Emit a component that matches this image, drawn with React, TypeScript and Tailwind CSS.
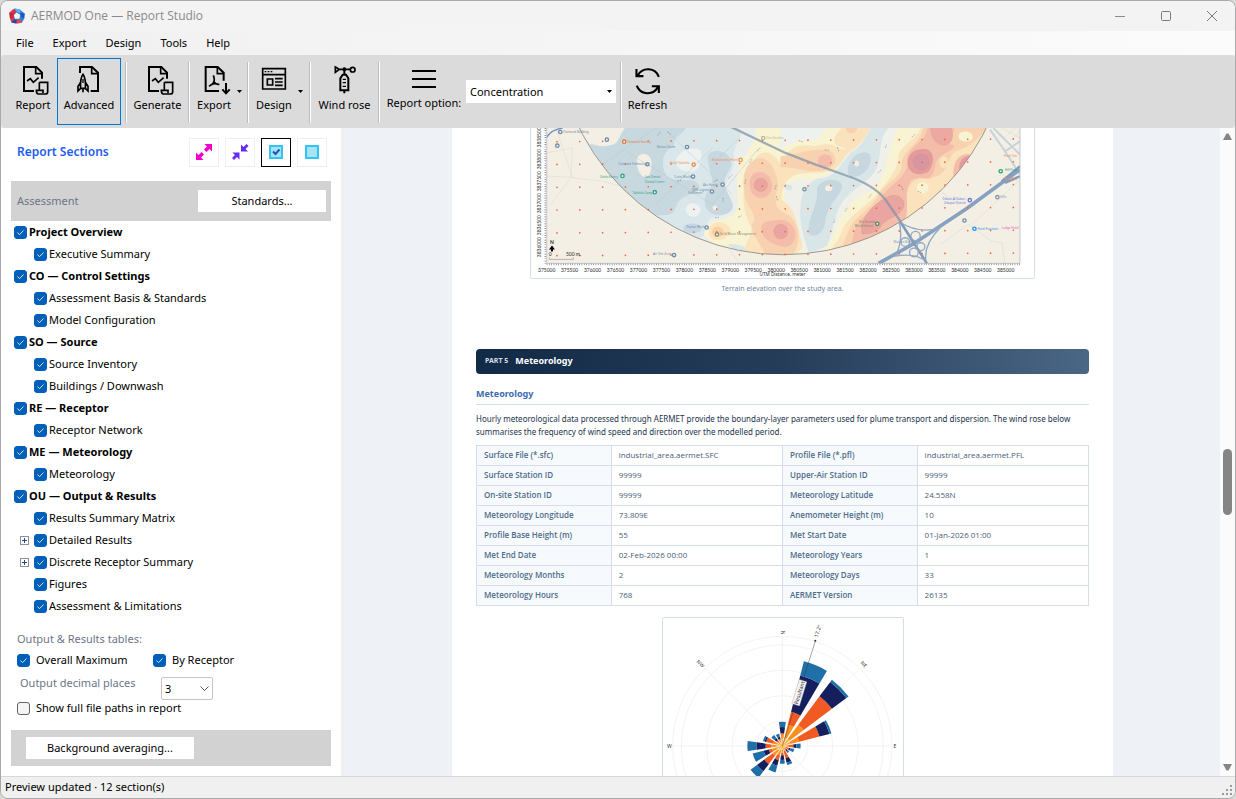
import React, { useState } from "react";

const menus = ["File", "Export", "Design", "Tools", "Help"];

type Node = { label: string; parent?: boolean; expandable?: boolean };

const tree: Node[] = [
  { label: "Project Overview", parent: true },
  { label: "Executive Summary" },
  { label: "CO — Control Settings", parent: true },
  { label: "Assessment Basis & Standards" },
  { label: "Model Configuration" },
  { label: "SO — Source", parent: true },
  { label: "Source Inventory" },
  { label: "Buildings / Downwash" },
  { label: "RE — Receptor", parent: true },
  { label: "Receptor Network" },
  { label: "ME — Meteorology", parent: true },
  { label: "Meteorology" },
  { label: "OU — Output & Results", parent: true },
  { label: "Results Summary Matrix" },
  { label: "Detailed Results", expandable: true },
  { label: "Discrete Receptor Summary", expandable: true },
  { label: "Figures" },
  { label: "Assessment & Limitations" },
];

const facts = [
  ["Surface File (*.sfc)", "industrial_area.aermet.SFC", "Profile File (*.pfl)", "industrial_area.aermet.PFL"],
  ["Surface Station ID", "99999", "Upper-Air Station ID", "99999"],
  ["On-site Station ID", "99999", "Meteorology Latitude", "24.558N"],
  ["Meteorology Longitude", "73.809E", "Anemometer Height (m)", "10"],
  ["Profile Base Height (m)", "55", "Met Start Date", "01-Jan-2026 01:00"],
  ["Met End Date", "02-Feb-2026 00:00", "Meteorology Years", "1"],
  ["Meteorology Months", "2", "Meteorology Days", "33"],
  ["Meteorology Hours", "768", "AERMET Version", "26135"],
];

function Logo() {
  return (
    <svg viewBox="-10 -10 20 20" className="size-4">
      <path d="M-3 -9.500L3.500 -8L9.500 -3L9 3L6 8.500L-1 9.500L-6.500 8L-9 2L-9.500 -4Z" fill="#2b7fdc" />
      <path d="M-5 -8.500L0 -6L-3 -3L-4.500 1L-3 4L-7 8L-9 2L-9.500 -4Z" fill="#e8343f" />
      <path d="M-9.500 -4L-4 -3.500L-4.500 1L-8 3Z" fill="#c9283c" />
      <path d="M-3 -9.500L4 -8L4.500 -3.500L0 -5Z" fill="#57b4f2" />
      <path d="M4 -4L9.500 -3L9 3L5 1Z" fill="#1c56c4" />
      <path d="M-3 4L1 5L4.500 3.500L6 8.500L0 9.500Z" fill="#e94650" />
      <path d="M-7 8L-3 4L0 5.500L-1 9.500Z" fill="#2348a8" />
      <path d="M-0.500 -4.500L4 -1.500L3 3.500L-2.500 3.500L-4 -1Z" fill="#f7f7f7" />
    </svg>
  );
}

function DocIcon() {
  return (
    <svg viewBox="69 198 84 96" className="ml-1.5 h-8 w-7" fill="none" stroke="#000" strokeWidth="6">
      <path d="M105 276H75V204H112L129 221V239" />
      <path d="M110 204V224H129" strokeWidth="5" />
      <path d="M84 246L94 239L103 250L119 236" strokeWidth="5" />
      <path d="M121 250H146V278Q146 285 138 285H118Q112 285 112 274H132V282M121 250V274" strokeWidth="5" />
    </svg>
  );
}

function RocketIcon() {
  return (
    <svg viewBox="225 198 84 96" className="h-8 w-7" fill="none" stroke="#000" strokeWidth="6">
      <path d="M240 222V204H276L294 221V276H272" />
      <path d="M275 204V224H294" strokeWidth="5" />
      <path d="M249 226Q240 238 242 268H256Q258 238 249 226ZM242 250L234 262V276L242 268M256 250L264 262V276L256 268M249 268V280" strokeWidth="5" />
      <path d="M249 240V252" strokeWidth="4" />
    </svg>
  );
}

function PdfIcon() {
  return (
    <svg viewBox="604 198 84 96" className="ml-1.5 h-8 w-7" fill="none" stroke="#000" strokeWidth="6">
      <path d="M652 276H612V204H648L666 221V245" />
      <path d="M647 204V224H666" strokeWidth="5" />
      <path d="M635 229Q641 244 634 253L622 262M635 247Q642 257 653 256M629 257Q638 252 646 255" strokeWidth="5" />
      <path d="M673 252V280M662 271L673 283L684 271" />
    </svg>
  );
}

function DesignIcon() {
  return (
    <svg viewBox="777 198 84 96" className="h-8 w-7" fill="none" stroke="#000" strokeWidth="5">
      <path d="M785 209H853V270H785ZM785 227H853" />
      <path d="M791 218H796M800 218H805M809 218H814" strokeWidth="4" />
      <path d="M799 240H815V258H799Z" />
      <path d="M822 239H845M822 249H845M822 259H845" />
    </svg>
  );
}

function WindIcon() {
  return (
    <svg viewBox="993 196 84 96" className="h-8 w-7" fill="none" stroke="#000" strokeWidth="6">
      <path d="M1006 202V218L1018 209ZM1012 209H1050" strokeWidth="5" />
      <circle cx="1058" cy="210" r="7" strokeWidth="5" />
      <circle cx="1033" cy="209" r="6" fill="#000" stroke="none" />
      <path d="M1033 212V225M1021 272V236L1028 225H1038L1045 236V272ZM1033 272V281" />
      <path d="M1028 239H1038M1028 249H1038M1028 260H1038" strokeWidth="4" />
    </svg>
  );
}

function RefreshIcon() {
  return (
    <svg viewBox="795 50 80 80" className="h-7 w-7" fill="none" stroke="#000" strokeWidth="6">
      <path d="M866 78A33 33 0 0 0 806 74M802 56V76H822" />
      <path d="M803 103A33 33 0 0 0 863 108M866 124V105H846" />
    </svg>
  );
}

function ToolButton({ label, icon, className, active = false }: { label: string; icon: React.ReactNode; className: string; active?: boolean }) {
  return (
    <button
      type="button"
      className={`flex h-[67px] flex-col items-center border pt-1.5 text-[11px] leading-[15px] whitespace-nowrap ${
        active ? "border-[#0078d7]" : "border-transparent"
      } ${className}`}
    >
      {icon}
      <span>{label}</span>
    </button>
  );
}

function MenuButton({ label, icon, className }: { label: string; icon: React.ReactNode; className: string }) {
  return (
    <button type="button" className={`flex h-[67px] items-start gap-1.5 border border-transparent pt-1.5 pl-1.5 text-[11px] leading-[15px] ${className}`}>
      <span className="flex flex-col items-center">
        {icon}
        <span>{label}</span>
      </span>
      <span className="pt-[25px]">
        <DropArrow />
      </span>
    </button>
  );
}

function DropArrow() {
  return (
    <svg viewBox="0 0 5 3" className="h-[3px] w-[5px]">
      <path d="M0 0H5L2.500 3Z" fill="#000" />
    </svg>
  );
}

function Separator() {
  return <div className="my-1 h-[61px] w-0.5 shrink-0 border-l border-r border-l-[#bdbdbd] border-r-white" />;
}

function Check({ id, on = true }: { id: string; on?: boolean }) {
  const [checked, setChecked] = useState(on);
  return (
    <span className="grid size-[13px] shrink-0">
      <input
        id={id}
        type="checkbox"
        checked={checked}
        onChange={(e) => setChecked(e.target.checked)}
        className="size-[13px] appearance-none rounded-[3px] border border-[#626262] bg-[#f5f5f5] [grid-area:1/1] checked:border-[#005fb8] checked:bg-[#005fb8]"
      />
      {checked && (
        <svg viewBox="0 0 13 13" className="pointer-events-none size-[13px] [grid-area:1/1]" fill="none" stroke="#d5e6f5">
          <path d="M3.500 6.500L5.500 8.700L9.500 4.500" />
        </svg>
      )}
    </span>
  );
}

function IconButton({ label, active = false, children }: { label: string; active?: boolean; children: React.ReactNode }) {
  return (
    <button
      type="button"
      aria-label={label}
      className={`flex h-[29px] w-[30px] items-center justify-center border ${active ? "border-black" : "border-[#efefef]"}`}
    >
      <svg viewBox="0 0 18 18" className="size-[18px]">
        {children}
      </svg>
    </button>
  );
}

function TerrainMap() {
  const dots: React.ReactNode[] = [];
  for (let r = 0; r < 6; r++)
    for (let c = 0; c < 21; c++) {
      const x = 93 + c * 68.6;
      dots.push(<circle key={`${r}-${c}`} cx={x} cy={41 + r * 68.6 - c * 0.4} r="2.6" />);
    }
  const pins: [number, number, string, string][] = [
    [103, 12, "#6e8ba6", "Diamond Building"],
    [94, 53, "#6e8ba6", ""],
    [243, 35, "#6e8ba6", ""],
    [295, 41, "#e9763c", "Chemical Factory"],
    [290, 144, "#2fa08b", ""],
    [387, 193, "#2fa08b", ""],
    [484, 57, "#6e8ba6", ""],
    [365, 109, "#6e8ba6", ""],
    [504, 110, "#f08a4a", ""],
    [502, 146, "#6e8ba6", ""],
    [591, 170, "#6e8ba6", ""],
    [559, 191, "#6e8ba6", ""],
    [645, 96, "#f29a45", ""],
    [713, 30, "#b7b79a", "Zinc Smelter"],
    [543, 299, "#6e8ba6", ""],
    [574, 320, "#8a8a6a", "Solid Waste Management"],
    [445, 382, "#6e8ba6", ""],
    [837, 184, "#6e8ba6", ""],
    [1056, 288, "#5a8a5a", ""],
    [1334, 217, "#6a78d8", ""],
    [1318, 278, "#6e8ba6", ""],
    [1348, 303, "#2b8fe6", "Hotel Fountain"],
    [1427, 130, "#1fa86a", ""],
    [1417, 208, "#7f97ad", "Hills"],
  ];
  const names: [number, number, string, string][] = [
    [278, 112, "#6285a8", "Concrete Technology"],
    [222, 150, "#2fa08b", "Oxide Eatery"],
    [320, 197, "#2fa08b", "Takshila Camp"],
    [358, 150, "#2fa08b", "Jain Dental"],
    [358, 164, "#2fa08b", "Dental Centre"],
    [393, 59, "#6e8ba6", "Natura Stone"],
    [432, 108, "#f08a4a", "Hotel Takshila"],
    [445, 149, "#6e8ba6", "Costa World"],
    [532, 173, "#6e8ba6", "Ako Hotels"],
    [498, 188, "#6e8ba6", "SMR Logistic"],
    [488, 199, "#6e8ba6", "Fulfilment"],
    [558, 99, "#f08a4a", "Monumental Hotel"],
    [482, 300, "#6e8ba6", "Tractor Works"],
    [382, 383, "#6e8ba6", "Air Tele Zone"],
    [1000, 287, "#7a8a5a", "The Goenka"],
    [988, 298, "#7a8a5a", "World School"],
    [1252, 215, "#6a78d8", "Debari AI Sabari"],
    [1256, 227, "#6a78d8", "Udaipur District"],
    [1105, 346, "#7f97ad", "Maxton Bridge"],
    [1430, 304, "#e656c0", "Lodge Hotel"],
    [1440, 130, "#1fa86a", "Hill Park"],
    [1436, 88, "#f08a4a", "Hotel Om"],
    [1436, 156, "#f08a4a", "Hotel Rao"],
  ];
  return (
    <svg viewBox="15 0 1512 450" className="block w-full">
      <defs>
        <clipPath id="plot">
          <rect x="62" y="0" width="1423" height="407" />
        </clipPath>
        <clipPath id="domain">
          <circle cx="772" cy="-301" r="682" />
        </clipPath>
      </defs>
      <g clipPath="url(#plot)">
        <rect x="62" y="0" width="1423" height="407" fill="#f4efe4" />
        <g fill="none" stroke="#e6e3dc" strokeWidth="3">
          <path d="M62 75L140 60L135 150L75 228M90 0L140 150L230 160L300 178L380 240M62 145L140 148M600 350L640 405M1245 350L1330 290L1400 340L1430 345L1440 405M1340 290L1480 160M1245 190L1300 230" />
        </g>
        <path d="M62 28Q75 5 110 0" fill="none" stroke="#6b97cf" strokeWidth="4" />
        <path d="M1405 0L1485 80M1395 5L1440 70L1485 40M1440 70L1485 140" fill="none" stroke="#c8d2dc" strokeWidth="6" />
        <path d="M1430 0L1485 30M1445 25L1470 0M1460 35L1485 10" fill="none" stroke="#e2e2e2" strokeWidth="3" />
        <g clipPath="url(#domain)">
          <rect x="62" y="0" width="1423" height="407" fill="#eaeeed" />
          <path d="M150 0H640C660 30 620 50 625 90C628 140 590 150 600 190C625 230 640 260 560 268C530 280 560 330 510 330L380 300L160 100Z" fill="#dae7ea" />
          <path d="M190 50C225 45 245 62 260 45C280 25 275 5 300 -5H480C480 20 440 20 445 55C410 70 405 105 418 135C430 170 500 145 515 165C540 190 480 200 465 215C440 235 460 265 405 262C370 270 330 240 290 200Z" fill="#c8d8df" />
          <path d="M150 -5H302C275 20 285 50 250 52C225 60 205 48 192 48Z" fill="#f4efe4" />
          <path d="M333 100C332 70 378 70 377 105C380 165 335 160 333 100Z" fill="#f4efe4" />
          <path d="M453 110C445 80 480 60 505 62C535 60 530 90 520 115C510 140 460 135 453 110Z" fill="#edf1f1" />
          <path d="M545 90C550 60 600 65 612 90C630 120 595 135 597 165C600 195 615 200 622 235C620 270 545 270 540 235C525 190 575 180 555 140Z" fill="#c8d8e1" />
          <circle cx="568" cy="240" r="7" fill="#f4efe4" />
          <path d="M480 245C480 220 523 220 524 247C520 275 483 272 480 245Z" fill="#edf1f1" />
          <ellipse cx="500" cy="302" rx="27" ry="15" fill="#c5d6e4" />
          <path d="M690 0C695 50 650 75 638 130C625 190 650 225 625 260C590 285 545 265 535 320L600 400H1500V-10Z" fill="#f8f3d3" />
          <path d="M605 352C620 345 660 350 675 375H640Z" fill="#d6e6ea" />
          <path d="M700 80C730 60 755 90 765 110C790 60 815 45 870 55C930 30 950 80 960 60C900 50 935 20 950 -5H1060C1030 20 990 70 985 100C950 130 900 135 850 135C785 135 770 170 768 215C800 245 840 260 840 330C835 380 790 390 765 390L655 375C660 330 690 320 672 290C640 230 650 130 700 80Z" fill="#fae3bd" />
          <path d="M675 105C720 60 760 130 757 180C745 220 745 245 790 262C835 300 820 375 790 390L720 385C710 350 680 330 678 290C705 260 655 240 656 190C650 160 655 120 675 105Z" fill="#f8d1b1" />
          <path d="M765 85C820 80 870 55 915 70C945 95 930 125 880 130C840 132 800 115 765 118Z" fill="#f8d1b1" />
          <path d="M550 320C545 275 595 275 612 300C630 330 555 355 550 320Z" fill="#fae3bd" />
          <ellipse cx="576" cy="312" rx="17" ry="16" fill="#f8cfa6" />
          <path d="M672 170C668 120 735 120 740 170C740 225 675 225 672 170Z" fill="#f3bdaa" />
          <circle cx="706" cy="171" r="20" fill="#eaa5a2" />
          <path d="M707 305C705 275 745 280 765 275C820 280 825 350 780 358C735 352 708 330 707 305Z" fill="#f3bdaa" />
          <ellipse cx="766" cy="311" rx="21" ry="22" fill="#eaa5a2" />
          <ellipse cx="899" cy="99" rx="22" ry="20" fill="#f3bdaa" />
          <path d="M960 -5C960 25 1000 20 995 -5Z" fill="#f8d1b1" />
          <path d="M765 -10H905C890 20 880 45 830 38C790 40 780 60 765 62Z" fill="#edf1f0" />
          <path d="M1120 -10C1090 70 1080 130 1060 165C1030 205 985 200 955 255C930 295 930 330 885 375L835 376C820 310 815 260 790 235C750 175 800 150 850 155C910 150 940 120 960 85C980 60 1010 60 1040 -10Z" fill="#f0f1ea" />
          <path d="M1100 -10C1060 20 1068 70 1058 110C1045 160 985 175 950 225C925 260 925 310 905 355L850 378C835 320 820 290 825 240C825 200 845 160 880 152C930 150 945 110 975 75C1015 55 1020 20 1045 -10Z" fill="#d9e6e8" />
          <path d="M969 140C960 100 1000 65 1028 75C1045 85 1035 120 1015 135C1000 148 975 150 969 140Z" fill="#c6d7df" />
          <path d="M874 185C880 155 935 145 950 170C955 195 905 230 900 280C895 320 860 335 850 315C845 270 880 235 874 185Z" fill="#c6d7df" />
          <ellipse cx="910" cy="181" rx="11" ry="9" fill="#f4efe4" />
          <ellipse cx="994" cy="107" rx="7" ry="9" fill="#f4efe4" />
          <path d="M775 170C785 165 805 175 800 183C795 192 775 188 775 170Z" fill="#d9e6e8" />
          <path d="M1185 -10C1190 25 1140 40 1120 80C1120 130 1085 160 1055 200C1020 240 965 265 950 310C935 350 910 365 915 380L1200 300L1400 -10Z" fill="#fae3bd" />
          <path d="M1195 -10C1190 50 1130 60 1130 110C1130 150 1080 165 1060 200C1035 250 985 265 970 310L940 380L1130 300C1160 240 1130 200 1160 165C1190 140 1200 160 1220 150C1270 140 1260 100 1290 70C1330 55 1330 60 1400 -10Z" fill="#f8d1b1" />
          <path d="M1208 -10C1205 50 1140 50 1145 110C1145 150 1085 175 1065 215C1040 260 1000 260 985 320L975 360L1130 285C1165 255 1125 200 1160 155C1200 140 1215 170 1230 120C1230 70 1300 70 1285 50C1245 50 1290 30 1290 -10Z" fill="#f4bdaa" />
          <path d="M1215 -10C1210 20 1230 60 1265 52C1290 40 1285 10 1275 -10Z" fill="#eba9a2" />
          <path d="M1148 105C1148 70 1180 60 1205 65C1230 75 1225 110 1210 130C1185 145 1150 140 1148 105Z" fill="#e59b9e" />
          <circle cx="1188" cy="102" r="24" fill="#d896a2" />
          <path d="M1010 318C1000 280 1040 230 1075 215C1105 190 1140 205 1136 235C1125 270 1075 270 1065 300C1045 320 1015 320 1010 318Z" fill="#eaa5a2" />
          <path d="M1288 160C1275 110 1300 70 1340 80L1325 120Z" fill="#f4bdaa" />
          <path d="M1302 125C1300 95 1320 80 1335 85L1320 118Z" fill="#e59b9e" />
          <path d="M1300 25C1300 5 1345 5 1343 30C1340 45 1300 45 1300 25Z" fill="#f8f3d3" />
          <ellipse cx="1256" cy="103" rx="13" ry="18" fill="#fae3bd" />
          <path d="M1175 180C1175 155 1215 160 1210 182C1205 205 1175 200 1175 180Z" fill="#f8f3d3" />
          <path d="M300 70L560 230M430 15L620 200M390 230L560 60M200 130L420 -20M560 230L700 60M640 30L560 110" stroke="#b9c7cf" strokeWidth="2" fill="none" opacity="0.7" />
          <g fill="none" stroke="#c08a6a" strokeWidth="1" opacity="0.6">
            <circle cx="706" cy="171" r="20" />
            <ellipse cx="766" cy="311" rx="21" ry="22" />
            <path d="M1148 105C1148 70 1180 60 1205 65C1230 75 1225 110 1210 130C1185 145 1150 140 1148 105Z" />
            <circle cx="1188" cy="102" r="24" />
            <path d="M1010 318C1000 280 1040 230 1075 215C1105 190 1140 205 1136 235C1125 270 1075 270 1065 300C1045 320 1015 320 1010 318Z" />
          </g>
          <g stroke="#5d6a70" strokeWidth="2" strokeDasharray="5 3" opacity="0.75">
            <path d="M395 22L406 12M425 12L436 20M455 159L466 157M565 161L578 155M608 152L620 140M592 210L592 222M568 270L580 268M638 268L648 264M672 105L680 92M695 70L706 58M661 155L658 168M752 172L747 186M753 205L756 218M820 38L832 42M898 66L910 67M936 58L940 70M975 147L982 151M1030 210L1038 200M1058 135L1068 125M1080 60L1084 50M1128 175L1135 190M1178 190L1188 195M925 285L928 275M960 250L965 240M1160 28L1170 18" />
          </g>
        </g>
        <path d="M585 -18L780 75L865 108L960 142Q1045 170 1080 215L1125 280L1205 407" fill="none" stroke="#8095a6" strokeWidth="7" opacity="0.75" />
        <path d="M1060 407L1165 348L1325 242L1485 125" fill="none" stroke="#86a1c1" strokeWidth="11" />
        <path d="M1125 282L1205 407M1430 160L1485 115M1440 165L1485 145" fill="none" stroke="#7f9cbe" strokeWidth="7" />
        <g fill="none" stroke="#8ea9c4" strokeWidth="4">
          <circle cx="1171" cy="325" r="14" />
          <circle cx="1140" cy="343" r="13" />
          <circle cx="1166" cy="374" r="13" />
          <circle cx="1187" cy="357" r="12" />
          <path d="M1122 282Q1135 340 1110 385Q1170 375 1202 400Q1195 350 1245 300Q1180 320 1122 282" />
        </g>
        <circle cx="772" cy="-301" r="682" fill="none" stroke="#9b9890" strokeWidth="3" />
        <g fill="#f0683c">{dots}</g>
        {pins.map(([x, y, color, name]) => (
          <g key={`${x}-${y}`}>
            <circle cx={x} cy={y} r="5" fill="#f6f6f0" stroke={color} strokeWidth="4" />
            {name && (
              <text x={x + 9} y={y + 3} fontSize="9" fill={color} className="font-['Noto_Sans',sans-serif]">
                {name}
              </text>
            )}
          </g>
        ))}
        {names.map(([x, y, color, name]) => (
          <text key={`${x}-${y}`} x={x} y={y} fontSize="9" fill={color} className="font-['Noto_Sans',sans-serif]">
            {name}
          </text>
        ))}
      </g>
      <path d="M62 0V407H1485V0" fill="none" stroke="#a9b0bb" strokeWidth="2" />
      <path d="M58 0V407" stroke="#777" strokeWidth="5" strokeDasharray="2 5" />
      <path d="M62 410H1485" stroke="#777" strokeWidth="5" strokeDasharray="2 5" />
      <g fontSize="15" fill="#2a2a2a" className="font-[Lato,sans-serif]">
        {Array.from({ length: 21 }, (_, i) => (
          <text key={i} x={62 + i * 69} y="433" textAnchor="middle">
            {375000 + i * 500}
          </text>
        ))}
        {Array.from({ length: 6 }, (_, i) => (
          <text key={i} transform={`translate(46 ${28 + i * 66}) rotate(-90)`} textAnchor="middle">
            {3838500 - i * 500}
          </text>
        ))}
        <text x="771" y="446" fontSize="14" textAnchor="middle" className="font-['Noto_Sans',sans-serif]">
          UTM Distance, meter
        </text>
        <text x="78" y="348" fontWeight="700" textAnchor="middle">N</text>
        <path d="M78 353L87 365H69ZM75 364H81V371H75Z" fill="#000" />
        <text x="68" y="386">0</text>
        <text x="120" y="386">500 m.</text>
      </g>
      <path d="M70 389V395H142V389" fill="none" stroke="#9a948a" strokeWidth="2" />
    </svg>
  );
}

const palette = ["#fbb347", "#f7901e", "#f15a22", "#161f5e", "#1f6fa8"];

// Direction in degrees followed by the outer radius of each speed class.
const petals: [number, number[]][] = [
  [0, [22, 34, 38, 57, 73]],
  [22.5, [25, 66, 106, 218, 262]],
  [45, [28, 80, 186, 240, 248]],
  [67.5, [25, 52, 115, 146, 152]],
  [90, [12, 18, 33, 42, 55]],
  [112.5, [8, 12, 20, 26, 37]],
  [135, [6, 10, 15, 20, 26]],
  [157.5, [10, 16, 38, 52, 59]],
  [180, [12, 20, 28, 42, 53]],
  [202.5, [14, 28, 44, 61, 82]],
  [225, [16, 36, 68, 95, 119]],
  [247.5, [16, 32, 42, 58, 92]],
  [270, [18, 34, 50, 78, 105]],
  [292.5, [16, 28, 50, 55, 60]],
  [315, [10, 16, 22, 30, 41]],
  [337.5, [12, 18, 22, 29, 38]],
];

function point(deg: number, r: number) {
  const a = (deg * Math.PI) / 180;
  return `${(395 + r * Math.sin(a)).toFixed(1)} ${(409 - r * Math.cos(a)).toFixed(1)}`;
}

function WindRose() {
  return (
    <svg viewBox="37 25 720 474" className="block w-full">
      <g fill="none" stroke="#ededed" strokeWidth="2">
        {[76, 151, 227, 303, 329].map((r) => (
          <circle key={r} cx="395" cy="409" r={r} />
        ))}
        <path d="M66 409H724M395 80V499M162 176L490 504M628 176L310 494" />
      </g>
      {petals.map(([dir, radii]) =>
        radii.map((r, i) => {
          const inner = i === 0 ? 0 : radii[i - 1];
          const a = dir - 8.2;
          const b = dir + 8.2;
          return (
            <path
              key={`${dir}-${i}`}
              fill={palette[i]}
              d={`M${point(a, inner)}L${point(a, r)}A${r} ${r} 0 0 1 ${point(b, r)}L${point(b, inner)}A${inner} ${inner} 0 0 0 ${point(a, inner)}Z`}
            />
          );
        })
      )}
      <circle cx="395" cy="409" r="7" fill="#fbc04f" />
      <path d="M395 409L494 94" stroke="#333" strokeWidth="2" opacity="0.65" />
      <circle cx="494" cy="93" r="3" fill="#333" />
      <g fill="#333" fontSize="15" textAnchor="middle" className="font-['Noto_Sans',sans-serif]">
        <g transform="translate(446 249) rotate(-73)">
          <rect x="-38" y="-12" width="76" height="24" fill="#f3f3f3" stroke="#999" />
          <text y="6" fontSize="16">Resultant</text>
        </g>
        <text transform="translate(507 66) rotate(-73)" fontSize="16">17.2°</text>
        <text transform="translate(390 69) rotate(90)">N</text>
        <text transform="translate(636 168) rotate(45)">NE</text>
        <text transform="translate(146 166) rotate(45)">NW</text>
        <text x="733" y="414">E</text>
        <text x="56" y="414">W</text>
      </g>
    </svg>
  );
}

function Toolbar() {
  return (
    <div className="flex h-[73px] shrink-0 items-start rounded bg-[#dbdbdb] pt-[3px] pl-2 text-black">
      <ToolButton label="Report" icon={<DocIcon />} className="w-[48px]" />
      <ToolButton label="Advanced" icon={<RocketIcon />} className="w-[64px]" active />
      <div className="flex pl-1">
        <Separator />
        <ToolButton label="Generate" icon={<DocIcon />} className="w-[61px]" />
        <Separator />
        <MenuButton label="Export" icon={<PdfIcon />} className="w-[57px]" />
        <Separator />
        <MenuButton label="Design" icon={<DesignIcon />} className="w-[60px]" />
        <Separator />
        <ToolButton label="Wind rose" icon={<WindIcon />} className="w-[67px]" />
        <Separator />
      </div>
      <div className="flex h-[67px] items-center pl-1">
        <label htmlFor="report-option" className="flex w-20 flex-col items-center pb-2.5 text-[11px] leading-[15px] whitespace-nowrap">
          <svg viewBox="0 0 24 32" className="h-8 w-6" stroke="#000" strokeWidth="2">
            <path d="M0 8H24M0 16H24M0 24H24" />
          </svg>
          Report option:
        </label>
        <span className="grid w-[152px] items-center pl-0.5">
          <select id="report-option" className="h-[23px] w-full appearance-none bg-white pl-1 text-[11px] leading-4 [grid-area:1/1]">
            <option>Concentration</option>
          </select>
          <span className="pointer-events-none justify-self-end pr-1 [grid-area:1/1]">
            <DropArrow />
          </span>
        </span>
      </div>
      <div className="flex pl-1">
        <Separator />
        <ToolButton label="Refresh" icon={<span className="flex h-8 items-center"><RefreshIcon /></span>} className="w-[51px]" />
      </div>
    </div>
  );
}

function Sidebar() {
  return (
    <aside className="flex w-[340px] shrink-0 flex-col bg-white text-[11px] leading-4 text-black">
      <div className="flex h-[53px] items-center justify-between pr-[14px] pb-[5px] pl-4">
        <h2 className="text-[12px] font-semibold text-[#1d5cf0]">Report Sections</h2>
        <div className="flex gap-1.5">
          <IconButton label="Expand all">
            <path d="M9.500 1H17V8.500L14.500 6L11.500 9L9 6.500L12 3.500ZM8.500 17H1V9.500L3.500 12L6.500 9L9 11.500L6 14.500Z" fill="#f000c8" />
          </IconButton>
          <IconButton label="Collapse all">
            <path d="M10 8.500V1.500L12.500 4L15.500 1L17.500 3L14.500 6L17 8.500ZM8.500 9.500V16.500L6 14L3 17L1 15L4 12L1.500 9.500Z" fill="#6a2cf5" />
          </IconButton>
          <IconButton label="Select all" active>
            <path d="M3 3H15V15H3Z" fill="#a5e3f5" stroke="#35c3f3" strokeWidth="2" />
            <path d="M6 8.500L8.500 11L12.500 6.500" fill="none" stroke="#1c56b8" strokeWidth="2" />
          </IconButton>
          <IconButton label="Clear all">
            <path d="M3 3H15V15H3Z" fill="#a5e3f5" stroke="#35c3f3" strokeWidth="2" />
          </IconButton>
        </div>
      </div>
      <div className="mx-2.5 flex h-10 items-center justify-between bg-[#d2d2d2] pr-[5px] pl-1.5">
        <span className="text-[#6d7588]">Assessment</span>
        <button type="button" className="h-[22px] w-32 bg-white">Standards...</button>
      </div>
      <ul>
        {tree.map((n, i) => (
          <li key={n.label} className={`flex h-[22px] items-center ${n.parent ? "pl-[13px]" : n.expandable ? "pl-[19px]" : "pl-[33px]"}`}>
            {n.expandable && (
              <button type="button" aria-label={`Expand ${n.label}`} className="mr-[5px] flex size-[9px] items-center justify-center border border-[#919191]">
                <svg viewBox="0 0 5 5" className="size-[5px]">
                  <path d="M2 0H3V2H5V3H3V5H2V3H0V2H2Z" fill="#2b3f9e" />
                </svg>
              </button>
            )}
            <Check id={`section-${i}`} />
            <label htmlFor={`section-${i}`} className={`pl-0.5 ${n.parent ? "font-bold" : ""}`}>
              {n.label}
            </label>
          </li>
        ))}
      </ul>
      <div className="pt-3.5 pl-4">
        <p className="text-[#6d7588]">Output &amp; Results tables:</p>
        <div className="flex h-[26px] items-center">
          <div className="flex w-[136px] items-center gap-1.5">
            <Check id="overall" />
            <label htmlFor="overall">Overall Maximum</label>
          </div>
          <div className="flex items-center gap-1.5">
            <Check id="by-receptor" />
            <label htmlFor="by-receptor">By Receptor</label>
          </div>
        </div>
        <div className="flex h-[27px] items-start pl-[3px]">
          <label htmlFor="decimals" className="w-[141px] pt-0.5 text-[#6d7588]">Output decimal places</label>
          <span className="grid w-[52px] items-center pt-1">
            <select id="decimals" className="h-[23px] w-full appearance-none rounded-[2px] border border-[#c4c4c4] bg-white pl-[3px] [grid-area:1/1]">
              <option>3</option>
            </select>
            <svg viewBox="0 0 9 5" className="pointer-events-none mr-1 h-[5px] w-[9px] justify-self-end [grid-area:1/1]" fill="none" stroke="#555">
              <path d="M0.500 0.500L4.500 4.500L8.500 0.500" />
            </svg>
          </span>
        </div>
        <div className="flex h-4 items-center gap-1.5">
          <Check id="full-paths" on={false} />
          <label htmlFor="full-paths">Show full file paths in report</label>
        </div>
      </div>
      <div className="mx-2.5 mt-auto mb-2.5 flex h-9 items-center bg-[#d2d2d2] pl-[15px]">
        <button type="button" className="h-[22px] w-[168px] bg-white">Background averaging...</button>
      </div>
    </aside>
  );
}

function Preview() {
  return (
    <main className="flex min-w-0 flex-1 justify-center overflow-hidden bg-[#eef2f7]">
      <article className="w-full max-w-[661px] bg-white px-6">
        <figure className="flex flex-col items-center">
          <div className="w-full max-w-[505px] rounded-b-[2px] border border-t-0 border-[#d5deea]">
            <TerrainMap />
          </div>
          <figcaption className="pt-1 text-[7px] leading-3 text-[#6f87a3]">Terrain elevation over the study area.</figcaption>
        </figure>
        <h2 className="mt-[54px] flex h-[25px] items-center gap-[7px] rounded bg-linear-to-r from-[#112a45] via-[#263d59] to-[#4a6785] pl-[9px] text-[9px] font-bold text-white">
          <span className="text-[7px] text-[#d5deea]">PART 5</span>
          Meteorology
        </h2>
        <h3 className="mt-3.5 h-[17px] border-b border-[#d5deea] text-[9px] leading-3 font-bold text-[#3a69b0]">Meteorology</h3>
        <p className="mt-[7px] text-[8px] leading-[13px] text-[#22344d]">
          Hourly meteorological data processed through AERMET provide the boundary-layer parameters used for plume transport and dispersion. The wind rose below summarises the frequency of wind speed and direction over the modelled period.
        </p>
        <table className="mt-[7px] w-full table-fixed border-collapse text-left font-['Open_Sans',sans-serif] text-[8px] leading-3 text-[#4a6078]">
          <colgroup>
            <col className="w-[22%]" />
            <col className="w-[28%]" />
            <col className="w-[22%]" />
            <col className="w-[28%]" />
          </colgroup>
          <tbody>
            {facts.map(([a, b, c, d]) => (
              <tr key={a} className="h-5">
                <th scope="row" className="border border-[#d5deea] bg-[#f6fafd] px-[7px] font-semibold text-[#4d6b8a]">{a}</th>
                <td className="border border-[#d5deea] px-[7px]">{b}</td>
                <th scope="row" className="border border-[#d5deea] bg-[#f6fafd] px-[7px] font-semibold text-[#4d6b8a]">{c}</th>
                <td className="border border-[#d5deea] px-[7px]">{d}</td>
              </tr>
            ))}
          </tbody>
        </table>
        <figure className="mx-auto mt-[11px] w-full max-w-[242px] rounded-[2px] border border-[#d5deea]">
          <WindRose />
        </figure>
      </article>
    </main>
  );
}

export default function App() {
  return (
    <div className="h-screen bg-[#d9d9d6] font-['Noto_Sans',sans-serif]">
      <div className="flex h-full flex-col overflow-hidden rounded-lg border border-[#a9a9a9] bg-[#f0f0f0]">
        <header className="flex h-[30px] shrink-0 items-center bg-[#f3f3f3] pl-2">
          <Logo />
          <h1 className="flex-1 pl-1.5 font-['Open_Sans',sans-serif] text-[12px] text-[#8a8a8a]">AERMOD One — Report Studio</h1>
          <div className="flex">
            <button type="button" aria-label="Minimize" className="flex h-[29px] w-[46px] items-center justify-center">
              <svg viewBox="0 0 10 10" className="size-2.5" stroke="#8a8a8a"><path d="M0 5.500H10" /></svg>
            </button>
            <button type="button" aria-label="Maximize" className="flex h-[29px] w-[46px] items-center justify-center">
              <svg viewBox="0 0 10 10" className="size-2.5" stroke="#7a7a7a" fill="none"><rect x="0.500" y="0.500" width="9" height="9" rx="1" /></svg>
            </button>
            <button type="button" aria-label="Close" className="flex h-[29px] w-[46px] items-center justify-center">
              <svg viewBox="0 0 10 10" className="size-2.5" stroke="#7a7a7a"><path d="M0 0L10 10M10 0L0 10" /></svg>
            </button>
          </div>
        </header>
        <nav className="flex h-6 shrink-0 items-center gap-[19px] bg-linear-to-r from-[#f0f0f0] to-[#fbfbfb] pl-[15px] text-[11px] text-black">
          {menus.map((m) => (
            <button key={m} type="button">{m}</button>
          ))}
        </nav>
        <Toolbar />
        <div className="flex min-h-0 flex-1">
          <Sidebar />
          <div className="w-1 shrink-0 bg-[#f0f0f0]" />
          <Preview />
          <div className="flex w-[15px] shrink-0 flex-col items-center bg-[#fbfbfb] py-[5px]">
            <svg viewBox="0 0 9 7" className="h-[7px] w-[9px] shrink-0"><path d="M3.500 0.500H5.500L9 7H0Z" fill="#858585" /></svg>
            <div className="grow-[308]" />
            <div className="h-[66px] w-[9px] shrink-0 rounded-full bg-[#858585]" />
            <div className="grow-[249]" />
            <svg viewBox="0 0 9 7" className="h-[7px] w-[9px] shrink-0"><path d="M0 0H9L5.500 6.500H3.500Z" fill="#858585" /></svg>
          </div>
        </div>
        <footer className="flex h-[22px] shrink-0 items-center justify-between border-t border-[#d7d7d7] bg-[#f0f0f0] pl-1 text-[11px] text-black">
          <span>Preview updated · 12 section(s)</span>
          <svg viewBox="0 0 14 14" className="size-3.5 self-end" fill="#9a9a9a">
            <path d="M9 1H11V3H9ZM5 5H7V7H5ZM9 5H11V7H9ZM1 9H3V11H1ZM5 9H7V11H5ZM9 9H11V11H9Z" />
          </svg>
        </footer>
      </div>
    </div>
  );
}
